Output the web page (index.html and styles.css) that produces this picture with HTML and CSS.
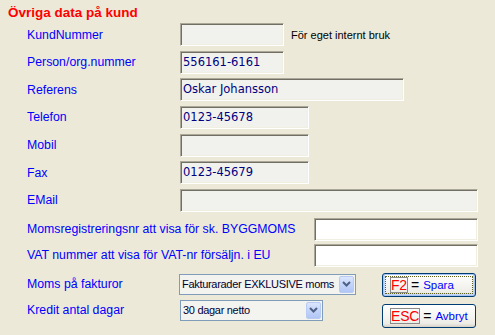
FILE: index.html
```html
<!DOCTYPE html>
<html lang="sv">
<head>
<meta charset="utf-8">
<title>Övriga data på kund</title>
<link rel="stylesheet" href="styles.css">
</head>
<body>
<div class="panel">
  <h1 class="title">Övriga data på kund</h1>

  <div class="rows">
    <div class="row">
      <span class="lbl">KundNummer</span>
      <div class="field w104"></div>
      <span class="note">För eget internt bruk</span>
    </div>
    <div class="row">
      <span class="lbl">Person/org.nummer</span>
      <div class="field w104">556161-6161</div>
    </div>
    <div class="row">
      <span class="lbl">Referens</span>
      <div class="field w224">Oskar Johansson</div>
    </div>
    <div class="row">
      <span class="lbl">Telefon</span>
      <div class="field w129">0123-45678</div>
    </div>
    <div class="row">
      <span class="lbl">Mobil</span>
      <div class="field w129"></div>
    </div>
    <div class="row">
      <span class="lbl">Fax</span>
      <div class="field w129">0123-45679</div>
    </div>
    <div class="row">
      <span class="lbl">EMail</span>
      <div class="field w298"></div>
    </div>
  </div>

  <div class="rows wide">
    <div class="row">
      <span class="lbl lbl-wide">Momsregistreringsnr att visa för sk. BYGGMOMS</span>
      <div class="field white w164"></div>
    </div>
    <div class="row">
      <span class="lbl lbl-wide">VAT nummer att visa för VAT-nr försäljn. i EU</span>
      <div class="field white w164"></div>
    </div>
  </div>

  <div class="bottom">
    <div class="selects">
      <div class="row srow">
        <span class="lbl lbl-sel">Moms på fakturor</span>
        <div class="select w177">
          <span class="sel-text">Fakturarader EXKLUSIVE moms</span>
          <span class="drop"><svg width="9" height="6" viewBox="0 0 9 6"><path d="M1 1 L4.5 4.5 L8 1" fill="none" stroke="#4d6185" stroke-width="2"/></svg></span>
        </div>
      </div>
      <div class="row srow">
        <span class="lbl">Kredit antal dagar</span>
        <div class="select w143">
          <span class="sel-text">30 dagar netto</span>
          <span class="drop"><svg width="9" height="6" viewBox="0 0 9 6"><path d="M1 1 L4.5 4.5 L8 1" fill="none" stroke="#4d6185" stroke-width="2"/></svg></span>
        </div>
      </div>
    </div>
    <div class="buttons">
      <button class="btn focused" type="button"><span class="key">F2</span><span class="eq">=</span><span class="act">Spara</span></button>
      <button class="btn" type="button"><span class="key">ESC</span><span class="eq">=</span><span class="act">Avbryt</span></button>
    </div>
  </div>
</div>
</body>
</html>
```

FILE: styles.css
```css
html, body {
  margin: 0;
  padding: 0;
  background: #ece9d8;
}
body {
  width: 495px;
  height: 335px;
  overflow: hidden;
  font-family: "Liberation Sans", Arial, sans-serif;
  font-size: 12.3px;
}
.panel {
  padding: 0 0 0 8px;
}
.title {
  margin: 0 0 2px 0;
  padding-top: 5px;
  height: 16px;
  line-height: 16px;
  font-family: "Liberation Sans", Arial, sans-serif;
  font-size: 13.5px;
  font-weight: bold;
  color: #ff0000;
}
.rows {
  display: flex;
  flex-direction: column;
  gap: 4.67px;
  margin-left: 19px;
}
.rows.wide {
  margin-top: 6px;
  gap: 3px;
}
.row {
  display: flex;
  align-items: center;
  height: 23px;
}
.lbl {
  width: 153px;
  flex: none;
  color: #0000ff;
  white-space: nowrap;
}
.lbl-wide {
  width: 287px;
}
.lbl-sel {
  width: 152px;
}
.field {
  box-sizing: border-box;
  height: 23px;
  border: 1px solid;
  border-color: #aca899 #ffffff #ffffff #aca899;
  box-shadow: inset 1px 1px 0 #716f64, inset -1px -1px 0 #f1efe2;
  background: #f1f2ee;
  color: #000080;
  padding: 0 0 0 2px;
  font-family: "DejaVu Sans", sans-serif;
  font-size: 11.5px;
  line-height: 20px;
  white-space: nowrap;
  overflow: hidden;
}
.field.white {
  background: #ffffff;
}
.w104 { width: 104px; }
.w129 { width: 129px; }
.w164 { width: 164px; }
.w224 { width: 224px; }
.w298 { width: 298px; }
.w177 { width: 177px; }
.w143 { width: 143px; }
.note {
  margin-left: 7px;
  font-size: 11px;
  color: #000000;
}
.bottom {
  display: flex;
  margin-top: 6px;
  margin-left: 19px;
}
.selects {
  display: flex;
  flex-direction: column;
  gap: 5px;
  margin-top: 1px;
}
.srow {
  height: 21px;
}
.select {
  box-sizing: border-box;
  height: 21px;
  border: 1px solid #7f9db9;
  background: #f3f3ef;
  display: flex;
  align-items: center;
  justify-content: space-between;
  padding: 0 1px 0 2px;
}
.sel-text {
  font-size: 11px;
  letter-spacing: -0.3px;
  color: #000033;
  white-space: nowrap;
}
.drop {
  box-sizing: border-box;
  width: 15px;
  height: 17px;
  border: 1px solid #b8cbf4;
  border-radius: 2px;
  background: linear-gradient(180deg, #dbe6fd 0%, #c3d4fa 50%, #b2c6f4 100%);
  display: flex;
  align-items: center;
  justify-content: center;
}
.buttons {
  display: flex;
  flex-direction: column;
  gap: 7px;
  margin-left: 26px;
}
.btn {
  box-sizing: border-box;
  width: 94px;
  height: 24px;
  border: 1px solid #003c74;
  border-radius: 3px;
  background: linear-gradient(180deg, #ffffff 0%, #f4f3ee 60%, #ecebe4 85%, #d6d0c5 100%);
  display: flex;
  align-items: center;
  padding: 0 0 0 7px;
  margin: 0;
  font-family: "Liberation Sans", Arial, sans-serif;
  cursor: default;
  white-space: nowrap;
}
.btn.focused {
  box-shadow: inset 0 0 0 1px #a6c4f4, inset 0 -1px 0 2px #c8d8f8;
  outline: 1px dotted #606020;
  outline-offset: -4px;
}
.key {
  box-sizing: border-box;
  height: 16px;
  border: 1px solid #8a8a8a;
  padding: 0;
  font-size: 14px;
  letter-spacing: -0.2px;
  line-height: 14px;
  color: #ff0000;
}
.eq {
  margin-left: 3px;
  font-size: 14px;
  color: #000000;
}
.act {
  margin-left: 4px;
  font-size: 11.5px;
  color: #0000ff;
}
```
